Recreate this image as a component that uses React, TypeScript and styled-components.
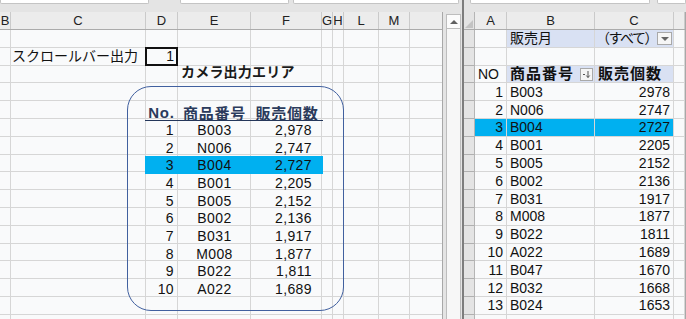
import React from "react";
import styled, { createGlobalStyle } from "styled-components";

const GlobalStyle = createGlobalStyle`
  html, body {
    margin: 0;
    padding: 0;
    background: #e4e4e4;
  }
  body {
    font-family: "Liberation Sans", "Noto Sans CJK JP", sans-serif;
    color: #111;
  }
  * {
    box-sizing: border-box;
  }
`;

const LEFT_COLS = "11px 135px 32px 73px 71px 11px 11px 35px 31px 33px";
const RIGHT_COLS = "11px 32px 88px 79px 1fr";
const CAM_COLS = "33px 73px 72px";
const ROW_H = "17.8px";
const GRID = "#d6d6d6";
const LAVENDER = "#d9e1f3";
const HIGHLIGHT = "#00b0f0";

const Window = styled.div`
  width: 686px;
  height: 319px;
  overflow: hidden;
  display: flex;
  background: #e4e4e4;
`;

const LeftSide = styled.div`
  width: 462px;
  display: flex;
  flex-direction: column;
`;

const RightSide = styled.div`
  flex: 1;
  display: flex;
  flex-direction: column;
  min-width: 0;
`;

const Splitter = styled.div`
  width: 2px;
  background: #7d7d7d;
`;

const TopStrip = styled.div`
  height: 12px;
  flex: none;
  display: flex;
  align-items: flex-start;
`;

const StripBox = styled.div<{ $w: number; $gap: number }>`
  width: ${(p) => p.$w}px;
  margin-left: ${(p) => p.$gap}px;
  height: 4px;
  background: #fff;
  border: 1px solid #c4c4c4;
  border-top: none;
  border-radius: 0 0 2px 2px;
`;

const Main = styled.div`
  flex: 1;
  display: flex;
  min-height: 0;
`;

const Pane = styled.div<{ $w?: number }>`
  width: ${(p) => (p.$w ? `${p.$w}px` : "100%")};
  flex: none;
  display: flex;
  flex-direction: column;
  overflow: hidden;
  background: #f9fafb;
  border-right: 1px solid #a8a8a8;
`;

const HeaderRow = styled.div<{ $cols: string }>`
  display: grid;
  grid-template-columns: ${(p) => p.$cols};
  height: 18px;
  flex: none;
  background: #ececec;
  border-bottom: 1px solid #ababab;
`;

const ColHead = styled.div`
  display: flex;
  align-items: center;
  justify-content: center;
  border-right: 1px solid #cacaca;
  font-size: 13px;
  color: #222;
  overflow: visible;
  white-space: nowrap;
`;

const Corner = styled.div`
  position: relative;
  border-right: 1px solid #b5b5b5;
  background: #e4e4e4;
  &::after {
    content: "";
    position: absolute;
    right: 1px;
    bottom: 1px;
    border-left: 8px solid transparent;
    border-bottom: 8px solid #c3c3c3;
  }
`;

const Body = styled.div`
  position: relative;
  flex: 1;
  min-height: 0;
`;

const Row = styled.div<{ $cols: string }>`
  display: grid;
  grid-template-columns: ${(p) => p.$cols};
  height: ${ROW_H};
`;

const Cell = styled.div<{
  $align?: "left" | "right" | "center";
  $bold?: boolean;
  $bg?: string;
  $top?: boolean;
}>`
  position: relative;
  display: flex;
  align-items: ${(p) => (p.$top ? "flex-start" : "center")};
  justify-content: ${(p) =>
    p.$align === "right" ? "flex-end" : p.$align === "center" ? "center" : "flex-start"};
  padding: 0 3px;
  border-right: 1px solid ${GRID};
  border-bottom: 1px solid ${GRID};
  background: ${(p) => p.$bg || "transparent"};
  font-size: 14px;
  font-weight: ${(p) => (p.$bold ? 700 : 400)};
  white-space: nowrap;
  overflow: visible;
  line-height: 1;
`;

const RowHead = styled.div`
  background: #e4e4e4;
  border-right: 1px solid #b5b5b5;
  border-bottom: 1px solid #b0b0b0;
`;

const SelectedCell = styled(Cell)`
  &::after {
    content: "";
    position: absolute;
    left: -1px;
    top: -1px;
    right: -1px;
    bottom: -1px;
    border: 2px solid #111;
  }
`;

const Title = styled.span`
  font-size: 14px;
  font-weight: 700;
  letter-spacing: 0.2px;
  margin-top: -1px;
  color: #1a1a1a;
`;

const ScrollGap = styled.div`
  width: 3px;
`;

const Scrollbar = styled.div`
  width: 15px;
  margin-top: 2px;
  display: flex;
  flex-direction: column;
  border-left: 1px solid #bdbdbd;
  border-right: 1px solid #bdbdbd;
  background: #f7f7f7;
`;

const ScrollButton = styled.div`
  height: 15px;
  display: flex;
  align-items: center;
  justify-content: center;
  border-top: 1px solid #bdbdbd;
  border-bottom: 1px solid #bdbdbd;
  background: #fbfbfb;
  &::before {
    content: "";
    border-left: 4px solid transparent;
    border-right: 4px solid transparent;
    border-bottom: 4px solid #606060;
  }
`;

/* camera picture floating over the grid */
const Camera = styled.div`
  position: absolute;
  left: 127px;
  top: 56px;
  width: 217px;
  height: 225px;
  border: 1.5px solid #41609f;
  border-radius: 24px;
  padding: 15px 0 0 17px;
`;

const CamHeader = styled.div`
  display: grid;
  grid-template-columns: ${CAM_COLS};
  width: 178px;
  height: 19px;
  border-bottom: 1px solid #23365a;
`;

const CamHead = styled.div`
  display: flex;
  align-items: center;
  justify-content: center;
  font-size: 15px;
  font-weight: 700;
  letter-spacing: 0.8px;
  color: #2b3b5c;
  white-space: nowrap;
`;

const CamRow = styled.div<{ $hl?: boolean }>`
  display: grid;
  grid-template-columns: ${CAM_COLS};
  width: 178px;
  height: 17.7px;
  background: ${(p) => (p.$hl ? HIGHLIGHT : "transparent")};
`;

const CamCell = styled.div<{ $align: "right" | "center" }>`
  display: flex;
  align-items: center;
  justify-content: ${(p) => (p.$align === "right" ? "flex-end" : "center")};
  padding-right: ${(p) => (p.$align === "right" ? "4px" : "0")};
  font-size: 14px;
  letter-spacing: 0.4px;
  white-space: nowrap;
`;

const ValueCell = styled(CamCell)`
  padding-right: 11px;
`;

const DropButton = styled.div`
  position: absolute;
  right: 1px;
  top: 2px;
  width: 15px;
  height: 13px;
  display: flex;
  align-items: center;
  justify-content: center;
  border: 1px solid #a9a9a9;
  background: #f6f6f6;
  &::before {
    content: "";
    border-left: 4px solid transparent;
    border-right: 4px solid transparent;
    border-top: 4px solid #666;
  }
`;

const FilterButton = styled.div`
  position: absolute;
  right: 1px;
  top: 2px;
  width: 13px;
  height: 13px;
  display: flex;
  align-items: center;
  justify-content: center;
  border: 1px solid #a9a9a9;
  background: #f6f6f6;
`;

const HeadText = styled.span`
  font-size: 15px;
  font-weight: 700;
  letter-spacing: 1px;
`;

const AllText = styled.span`
  font-size: 14px;
  letter-spacing: -1.5px;
  margin-left: -2px;
`;

const leftCols = ["B", "C", "D", "E", "F", "G", "H", "L", "M", ""];
const rightCols = ["A", "B", "C", ""];

const data: [string, number][] = [
  ["B003", 2978],
  ["N006", 2747],
  ["B004", 2727],
  ["B001", 2205],
  ["B005", 2152],
  ["B002", 2136],
  ["B031", 1917],
  ["M008", 1877],
  ["B022", 1811],
  ["A022", 1689],
  ["B047", 1670],
  ["B032", 1668],
  ["B024", 1653],
];

const HL = 3;

function LeftRow({ index }: { index: number }) {
  return (
    <Row $cols={LEFT_COLS}>
      {leftCols.map((_, c) => {
        if (index === 1 && c === 1) {
          return (
            <Cell key={c} style={{ paddingLeft: 1 }}>
              スクロールバー出力
            </Cell>
          );
        }
        if (index === 1 && c === 2) {
          return (
            <SelectedCell key={c} $align="right">
              1
            </SelectedCell>
          );
        }
        if (index === 2 && c === 3) {
          return (
            <Cell key={c} $top>
              <Title>カメラ出力エリア</Title>
            </Cell>
          );
        }
        return <Cell key={c} />;
      })}
    </Row>
  );
}

function RightRow({ index }: { index: number }) {
  if (index === 0) {
    return (
      <Row $cols={RIGHT_COLS}>
        <RowHead />
        <Cell />
        <Cell $bg={LAVENDER}>販売月</Cell>
        <Cell $bg={LAVENDER}>
          <AllText>（すべて）</AllText>
          <DropButton />
        </Cell>
        <Cell />
      </Row>
    );
  }
  if (index === 2) {
    return (
      <Row $cols={RIGHT_COLS}>
        <RowHead />
        <Cell>NO</Cell>
        <Cell $bg={LAVENDER}>
          <HeadText>商品番号</HeadText>
          <FilterButton>
            <svg width="9" height="9" viewBox="0 0 9 9">
              <path d="M1 4.5h2" stroke="#555" strokeWidth="1" />
              <path d="M6 1v6.5M4.3 5.5L6 7.5 7.7 5.5" stroke="#555" strokeWidth="1" fill="none" />
            </svg>
          </FilterButton>
        </Cell>
        <Cell $bg={LAVENDER}>
          <HeadText>販売個数</HeadText>
        </Cell>
        <Cell />
      </Row>
    );
  }
  const d = index >= 3 ? data[index - 3] : undefined;
  const hl = d && index - 2 === HL ? HIGHLIGHT : undefined;
  return (
    <Row $cols={RIGHT_COLS}>
      <RowHead />
      <Cell $align="right" $bg={hl}>
        {d ? index - 2 : ""}
      </Cell>
      <Cell $bg={hl}>{d ? d[0] : ""}</Cell>
      <Cell $align="right" $bg={hl}>
        {d ? d[1] : ""}
      </Cell>
      <Cell />
    </Row>
  );
}

export default function App() {
  const rows = Array.from({ length: 17 }, (_, i) => i);
  return (
    <>
      <GlobalStyle />
      <Window>
        <LeftSide>
          <TopStrip>
            <StripBox $w={149} $gap={0} />
            <StripBox $w={109} $gap={31} />
            <StripBox $w={166} $gap={4} />
          </TopStrip>
          <Main>
            <Pane $w={443}>
              <HeaderRow $cols={LEFT_COLS}>
                {leftCols.map((c, i) => (
                  <ColHead key={i}>{c}</ColHead>
                ))}
              </HeaderRow>
              <Body>
                {rows.map((i) => (
                  <LeftRow key={i} index={i} />
                ))}
                <Camera>
                  <CamHeader>
                    <CamHead>No.</CamHead>
                    <CamHead>商品番号</CamHead>
                    <CamHead>販売個数</CamHead>
                  </CamHeader>
                  {data.slice(0, 10).map(([code, qty], i) => (
                    <CamRow key={code} $hl={i + 1 === HL}>
                      <CamCell $align="right">{i + 1}</CamCell>
                      <CamCell $align="center">{code}</CamCell>
                      <ValueCell $align="right">{qty.toLocaleString("en-US")}</ValueCell>
                    </CamRow>
                  ))}
                </Camera>
              </Body>
            </Pane>
            <ScrollGap />
            <Scrollbar>
              <ScrollButton />
            </Scrollbar>
          </Main>
        </LeftSide>
        <Splitter />
        <RightSide>
          <TopStrip>
            <StripBox $w={190} $gap={6} />
            <StripBox $w={30} $gap={7} />
          </TopStrip>
          <Pane>
            <HeaderRow $cols={RIGHT_COLS}>
              <Corner />
              {rightCols.map((c, i) => (
                <ColHead key={i}>{c}</ColHead>
              ))}
            </HeaderRow>
            <Body>
              {rows.map((i) => (
                <RightRow key={i} index={i} />
              ))}
            </Body>
          </Pane>
        </RightSide>
      </Window>
    </>
  );
}
